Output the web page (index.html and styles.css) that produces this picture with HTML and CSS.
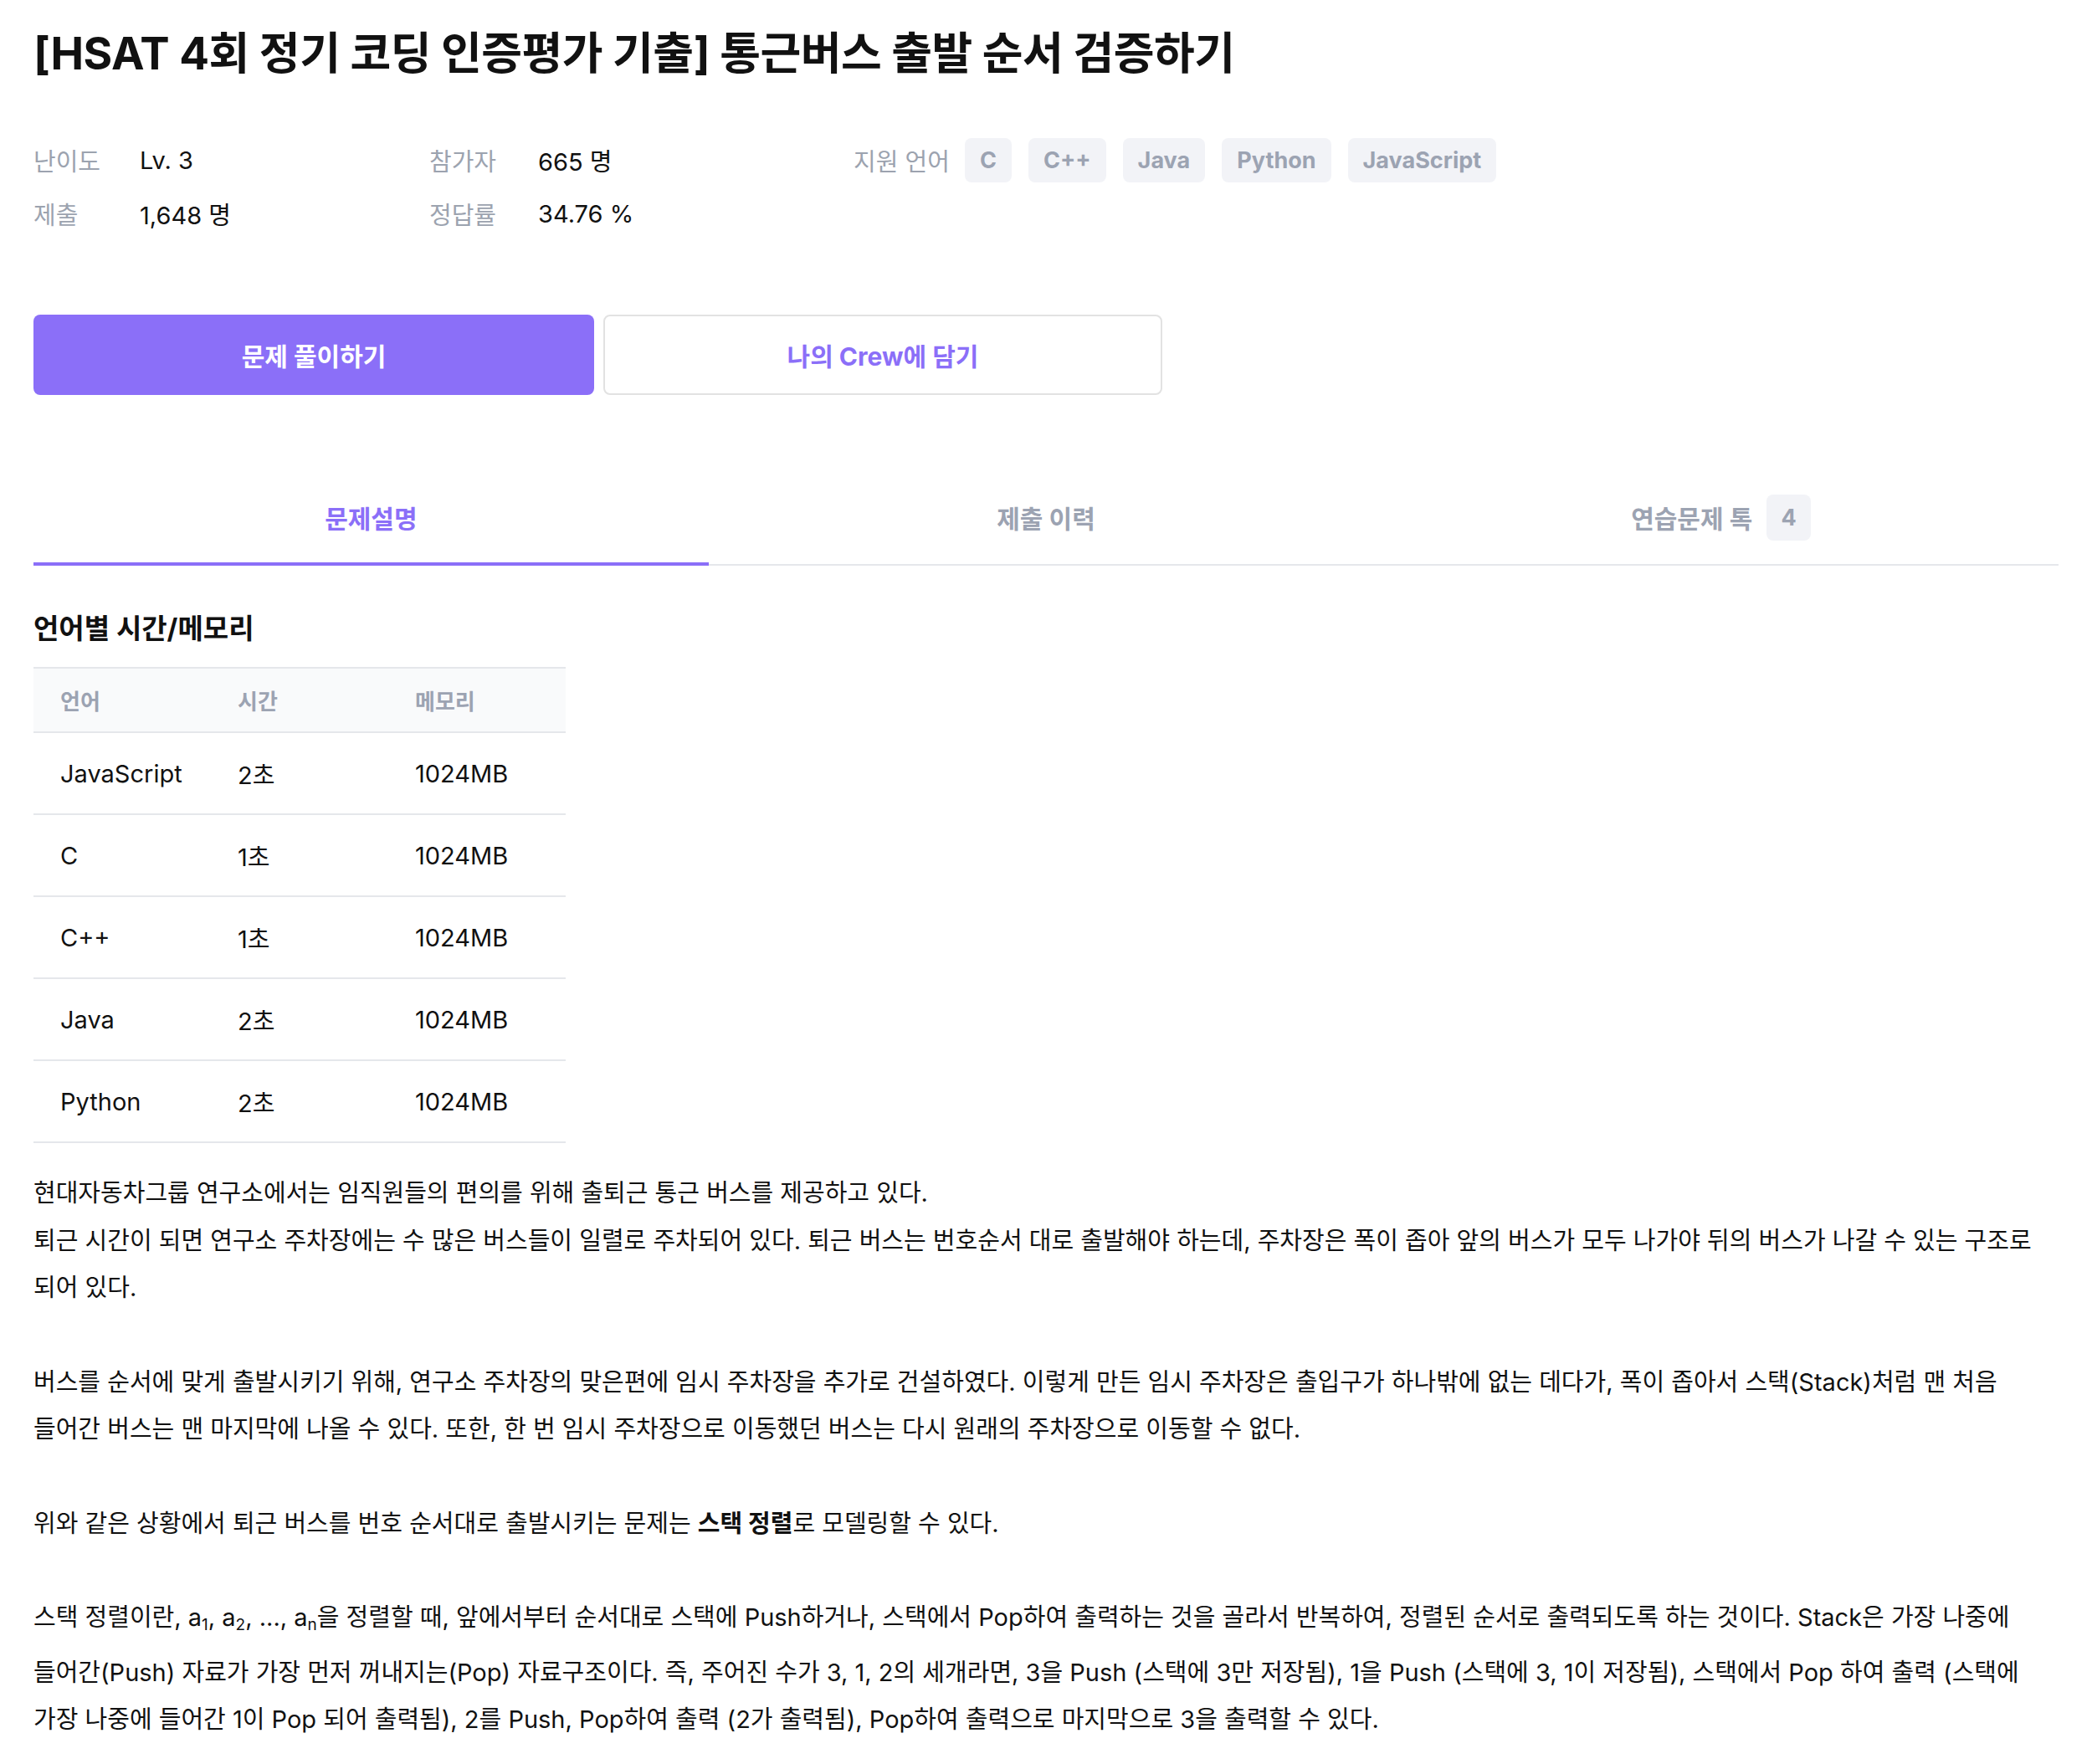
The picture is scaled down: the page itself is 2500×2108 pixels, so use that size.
FILE: index.html
```html
<!DOCTYPE html>
<html lang="ko">
<head>
<meta charset="utf-8">
<title>[HSAT 4회 정기 코딩 인증평가 기출] 통근버스 출발 순서 검증하기</title>
<link rel="stylesheet" href="styles.css">
</head>
<body>
<main class="page">
  <h1 class="title">[HSAT 4회 정기 코딩 인증평가 기출] 통근버스 출발 순서 검증하기</h1>

  <div class="meta">
    <span class="meta-label">난이도</span>
    <span class="meta-value">Lv. 3</span>
    <span class="meta-label">참가자</span>
    <span class="meta-value">665 명</span>
    <div class="langs">
      <span class="meta-label langs-label">지원 언어</span>
      <span class="tag">C</span>
      <span class="tag">C++</span>
      <span class="tag">Java</span>
      <span class="tag">Python</span>
      <span class="tag">JavaScript</span>
    </div>
    <span class="meta-label">제출</span>
    <span class="meta-value">1,648 명</span>
    <span class="meta-label">정답률</span>
    <span class="meta-value">34.76 %</span>
  </div>

  <div class="actions">
    <button class="btn btn-primary">문제 풀이하기</button>
    <button class="btn btn-outline">나의 Crew에 담기</button>
  </div>

  <nav class="tabs">
    <div class="tab tab-active">문제설명</div>
    <div class="tab">제출 이력</div>
    <div class="tab">연습문제 톡 <span class="badge">4</span></div>
  </nav>

  <h2 class="section-title">언어별 시간/메모리</h2>
  <table class="limits">
    <thead>
      <tr><th>언어</th><th>시간</th><th>메모리</th></tr>
    </thead>
    <tbody>
      <tr><td>JavaScript</td><td>2초</td><td>1024MB</td></tr>
      <tr><td>C</td><td>1초</td><td>1024MB</td></tr>
      <tr><td>C++</td><td>1초</td><td>1024MB</td></tr>
      <tr><td>Java</td><td>2초</td><td>1024MB</td></tr>
      <tr><td>Python</td><td>2초</td><td>1024MB</td></tr>
    </tbody>
  </table>

  <div class="desc">
    <p>현대자동차그룹 연구소에서는 임직원들의 편의를 위해 출퇴근 통근 버스를 제공하고 있다.<br>퇴근 시간이 되면 연구소 주차장에는 수 많은 버스들이 일렬로 주차되어 있다. 퇴근 버스는 번호순서 대로 출발해야 하는데, 주차장은 폭이 좁아 앞의 버스가 모두 나가야 뒤의 버스가 나갈 수 있는 구조로 되어 있다.</p>
    <p>버스를 순서에 맞게 출발시키기 위해, 연구소 주차장의 맞은편에 임시 주차장을 추가로 건설하였다. 이렇게 만든 임시 주차장은 출입구가 하나밖에 없는 데다가, 폭이 좁아서 스택(Stack)처럼 맨 처음 들어간 버스는 맨 마지막에 나올 수 있다. 또한, 한 번 임시 주차장으로 이동했던 버스는 다시 원래의 주차장으로 이동할 수 없다.</p>
    <p>위와 같은 상황에서 퇴근 버스를 번호 순서대로 출발시키는 문제는 <strong>스택 정렬</strong>로 모델링할 수 있다.</p>
    <p>스택 정렬이란, a<sub>1</sub>, a<sub>2</sub>, ..., a<sub>n</sub>을 정렬할 때, 앞에서부터 순서대로 스택에 Push하거나, 스택에서 Pop하여 출력하는 것을 골라서 반복하여, 정렬된 순서로 출력되도록 하는 것이다. Stack은 가장 나중에 들어간(Push) 자료가 가장 먼저 꺼내지는(Pop) 자료구조이다. 즉, 주어진 수가 3, 1, 2의 세개라면, 3을 Push (스택에 3만 저장됨), 1을 Push (스택에 3, 1이 저장됨), 스택에서 Pop 하여 출력 (스택에 가장 나중에 들어간 1이 Pop 되어 출력됨), 2를 Push, Pop하여 출력 (2가 출력됨), Pop하여 출력으로 마지막으로 3을 출력할 수 있다.</p>
  </div>
</main>
</body>
</html>
```

FILE: styles.css
```css
* { box-sizing: border-box; }

html, body {
  margin: 0;
  padding: 0;
  background: #ffffff;
}

body {
  font-family: Inter, "Noto Sans CJK KR", sans-serif;
  color: #111111;
  word-break: keep-all;
}

.page {
  width: 2500px;
  padding: 32px 40px 40px 40px;
}

.title {
  margin: 0;
  font-size: 53px;
  line-height: 65px;
  font-weight: 700;
  letter-spacing: -0.5px;
  color: #111111;
}

.meta {
  margin-top: 62px;
  display: grid;
  grid-template-columns: 127px 346px 130px 377px auto;
  grid-template-rows: 64px 64px;
  align-items: center;
  font-size: 29px;
}

.meta-label {
  color: #9ca3af;
}

.meta-value {
  color: #111111;
}

.langs {
  display: flex;
  align-items: center;
  gap: 20px;
}

.langs-label {
  width: 113px;
  white-space: nowrap;
}

.tag {
  display: inline-flex;
  align-items: center;
  height: 53px;
  padding: 0 18px;
  border-radius: 8px;
  background: #f2f3f7;
  color: #9ca3b2;
  font-weight: 700;
  font-size: 27px;
}

.actions {
  margin-top: 89px;
  display: flex;
  gap: 11px;
}

.btn {
  width: 670px;
  height: 96px;
  border-radius: 8px;
  font-family: inherit;
  font-size: 30px;
  font-weight: 700;
  cursor: pointer;
}

.btn-primary {
  background: #8b6ff8;
  border: 0;
  color: #ffffff;
}

.btn-outline {
  width: 668px;
  background: #ffffff;
  border: 2px solid #e2e2e2;
  color: #8b6ff8;
}

.tabs {
  margin-top: 92px;
  display: flex;
  border-bottom: 2px solid #e5e7eb;
}

.tab {
  flex: 1;
  height: 112px;
  margin-bottom: -2px;
  border-bottom: 4px solid transparent;
  display: flex;
  align-items: center;
  justify-content: center;
  font-size: 30px;
  font-weight: 700;
  color: #9ca3b2;
}

.tab-active {
  color: #8b6ff8;
  border-bottom-color: #8b6ff8;
}

.badge {
  display: inline-flex;
  align-items: center;
  justify-content: center;
  width: 53px;
  height: 55px;
  margin-left: 17px;
  border-radius: 8px;
  background: #f2f3f7;
  color: #9ca3b2;
  font-size: 27px;
}

.section-title {
  margin: 55px 0 0 0;
  font-size: 33px;
  line-height: 40px;
  font-weight: 700;
  color: #111111;
}

.limits {
  margin-top: 26px;
  width: 636px;
  border-collapse: collapse;
  table-layout: fixed;
  font-size: 29px;
}

.limits th,
.limits td {
  text-align: left;
  padding: 0 0 0 32px;
  border-top: 2px solid #e5e7eb;
  border-bottom: 2px solid #e5e7eb;
}

.limits th {
  height: 77px;
  background: #f9fafb;
  color: #9ca3b2;
  font-size: 26px;
  font-weight: 700;
}

.limits td {
  height: 98px;
  color: #111111;
}

.desc {
  margin-top: 32px;
  font-size: 29px;
  line-height: 56.5px;
  color: #111111;
}

.desc p {
  margin: 0 0 56px 0;
}

.desc strong {
  font-weight: 700;
}

.desc sub {
  font-size: 19px;
  vertical-align: -5px;
}
```
